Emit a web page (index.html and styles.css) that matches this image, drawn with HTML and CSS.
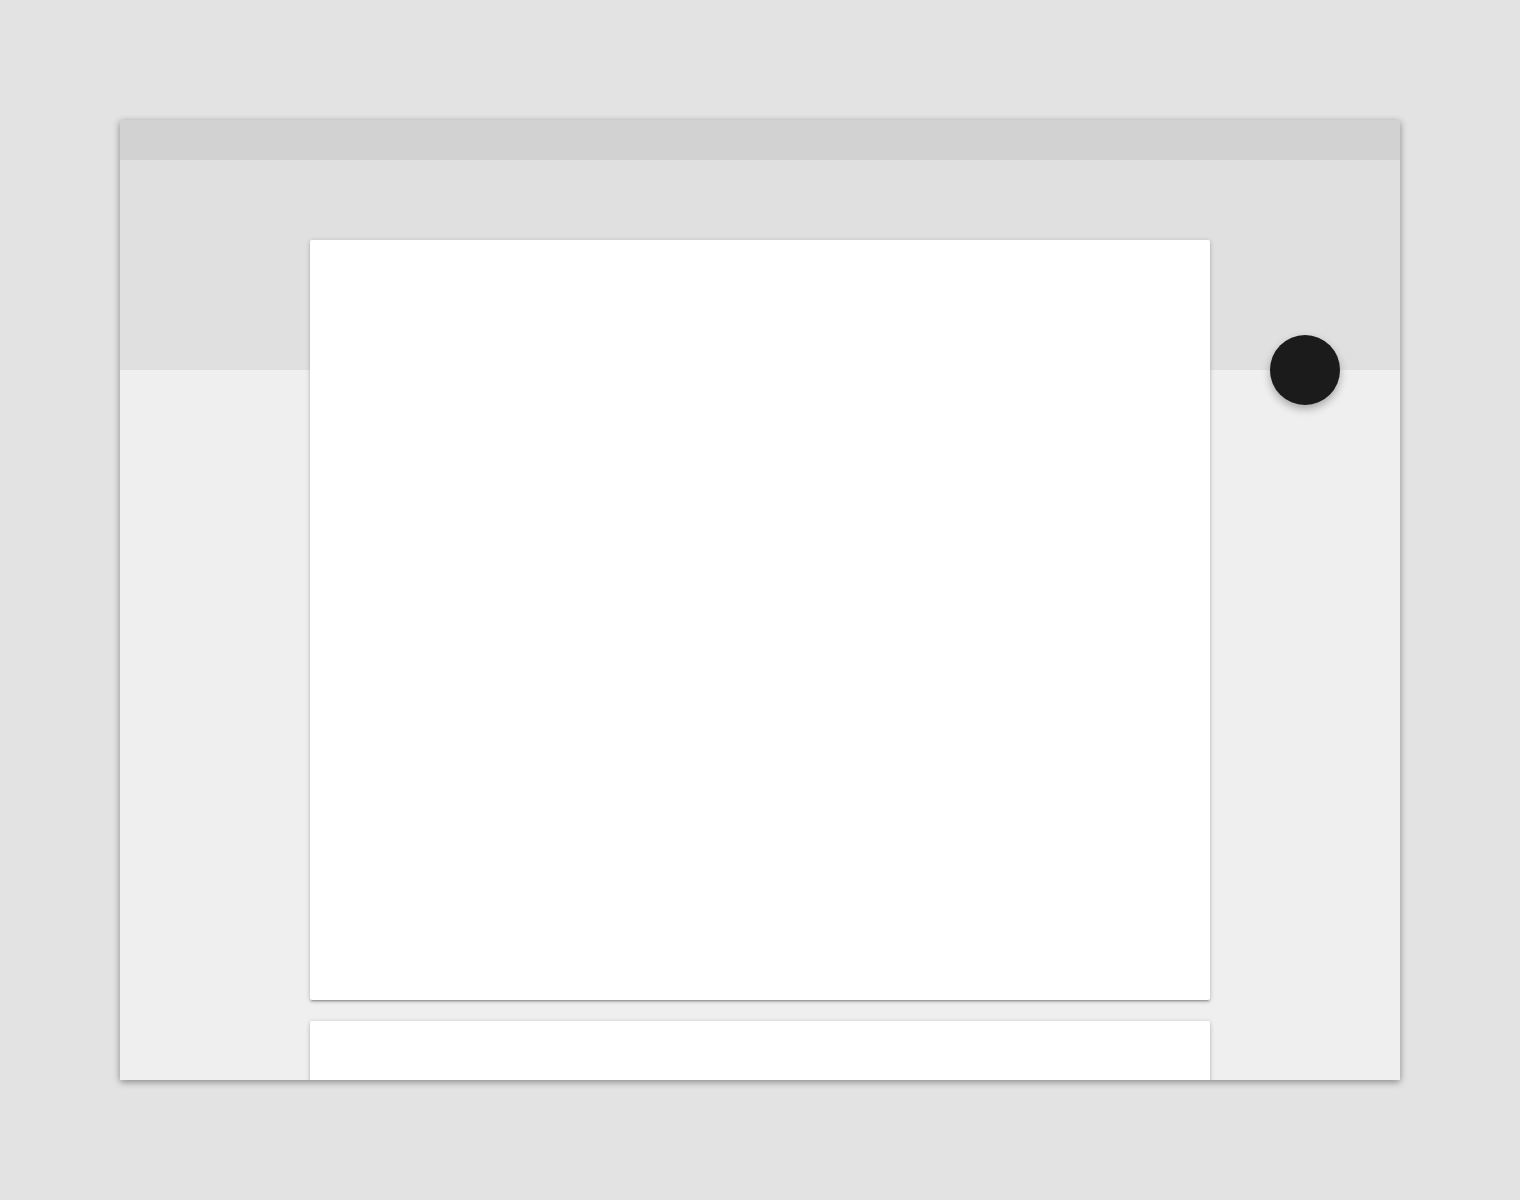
FILE: index.html
```html
<!DOCTYPE html>
<html>
<head>
<meta charset="utf-8">
<link rel="stylesheet" href="styles.css">
</head>
<body>
<div class="window">
  <div class="topbar"></div>
  <div class="main">
    <div class="card card-large"></div>
    <div class="card card-next"></div>
  </div>
  <div class="fab"></div>
</div>
</body>
</html>
```
FILE: styles.css
```css
html, body {
  margin: 0;
  padding: 0;
}
body {
  background: #e3e3e3;
  font-family: Roboto, "Liberation Sans", sans-serif;
  padding: 120px;
  height: 1200px;
  box-sizing: border-box;
}
.window {
  position: relative;
  width: 1280px;
  height: 960px;
  overflow: hidden;
  display: flex;
  flex-direction: column;
  box-shadow: 0 2px 7px rgba(0,0,0,0.4);
}
.topbar {
  height: 40px;
  flex: none;
  background: #d2d2d2;
}
.main {
  flex: 1;
  min-height: 0;
  display: flex;
  flex-direction: column;
  align-items: center;
  gap: 21px;
  padding-top: 80px;
  background: linear-gradient(to bottom, #e0e0e0 0, #e0e0e0 210px, #efefef 210px, #efefef 100%);
}
.card {
  width: 900px;
  flex: none;
  background: #ffffff;
  border-radius: 2px;
  box-shadow: 0 2px 2px rgba(0,0,0,0.14), 0 3px 1px -2px rgba(0,0,0,0.12), 0 1px 5px rgba(0,0,0,0.2);
}
.card-large {
  height: 760px;
}
.card-next {
  height: 400px;
}
.fab {
  position: absolute;
  left: 1150px;
  top: 215px;
  width: 70px;
  height: 70px;
  border-radius: 50%;
  background: #1b1b1b;
  box-shadow: 0 4px 8px rgba(0,0,0,0.3);
}
```
